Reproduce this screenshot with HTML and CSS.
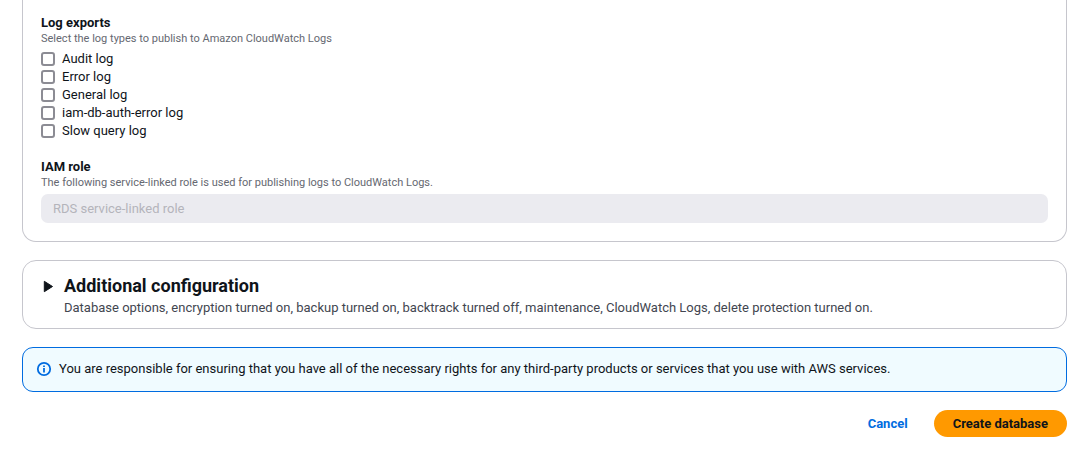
FILE: index.html
```html
<!DOCTYPE html>
<html lang="en">
<head>
<meta charset="utf-8">
<meta name="viewport" content="width=device-width, initial-scale=1">
<title>Create database</title>
<link rel="stylesheet" href="styles.css">
</head>
<body>
<form class="page">
  <section class="panel panel-open">
    <fieldset class="field">
      <legend class="label">Log exports</legend>
      <p class="hint">Select the log types to publish to Amazon CloudWatch Logs</p>
      <div class="options">
        <label class="option"><input class="box" type="checkbox">Audit log</label>
        <label class="option"><input class="box" type="checkbox">Error log</label>
        <label class="option"><input class="box" type="checkbox">General log</label>
        <label class="option"><input class="box" type="checkbox">iam-db-auth-error log</label>
        <label class="option"><input class="box" type="checkbox">Slow query log</label>
      </div>
    </fieldset>
    <div class="field">
      <label class="label" for="role">IAM role</label>
      <p class="hint" id="role-hint">The following service-linked role is used for publishing logs to CloudWatch Logs.</p>
      <input class="text-input" id="role" type="text" value="RDS service-linked role" aria-describedby="role-hint" disabled>
    </div>
  </section>

  <section class="panel expander">
    <button class="toggle" type="button" aria-expanded="false" aria-labelledby="more-title">
      <svg class="caret" viewBox="0 0 14 14" aria-hidden="true"><path d="M3.3 2.3v10.4L11.5 7.5z" fill="currentColor" stroke="currentColor" stroke-width="1" stroke-linejoin="round"/></svg>
    </button>
    <div>
      <h2 class="title" id="more-title">Additional configuration</h2>
      <p class="summary">Database options, encryption turned on, backup turned on, backtrack turned off, maintenance, CloudWatch Logs, delete protection turned on.</p>
    </div>
  </section>

  <div class="notice" role="note">
    <svg class="info" viewBox="0 0 16 16" aria-hidden="true"><circle cx="8" cy="8" r="6.2" fill="none" stroke="currentColor" stroke-width="1.8"/><path d="M7.1 7h1.8v4.6H7.1zM7.1 4.4h1.8V6H7.1z" fill="currentColor"/></svg>
    <p class="notice-text">You are responsible for ensuring that you have all of the necessary rights for any third-party products or services that you use with AWS services.</p>
  </div>

  <div class="actions">
    <button class="button" type="button">Cancel</button>
    <button class="button primary" type="submit">Create database</button>
  </div>
</form>
</body>
</html>
```
FILE: styles.css
```css
* { box-sizing: border-box; }
body {
  margin: 0;
  background: #fff;
  color: #0f141a;
  font: 13px/18px Roboto, "Noto Sans", sans-serif;
}
p, h2 { margin: 0; }
.page {
  display: flex;
  flex-direction: column;
  gap: 18px;
  padding: 0 17px 28px 22px;
}
.panel {
  border: 1px solid #c6c6cd;
  border-radius: 14px;
}
.panel-open {
  display: flex;
  flex-direction: column;
  gap: 18px;
  padding: 14px 18px 18px;
  border-top: 0;
  border-radius: 0 0 14px 14px;
}
.field {
  display: flex;
  flex-direction: column;
  min-width: 0;
  margin: 0;
  padding: 0;
  border: 0;
}
.label {
  padding: 0;
  font-weight: 700;
}
.hint {
  margin-bottom: 4px;
  color: #656871;
  font-size: 11px;
  line-height: 14px;
}
.options {
  display: flex;
  flex-direction: column;
  align-items: flex-start;
}
.option {
  display: flex;
  align-items: center;
  gap: 7px;
}
.box {
  appearance: none;
  width: 14px;
  height: 14px;
  margin: 0;
  border: 2px solid #8c8c94;
  border-radius: 3px;
  background: #fff;
}
.box:checked { background: #006ce0; }
.text-input {
  width: 100%;
  height: 29px;
  padding: 0 12px;
  border: 0;
  border-radius: 7px;
  background: #ebebf0;
  color: #b4b4bb;
  font: inherit;
}
.expander {
  display: flex;
  gap: 9px;
  padding: 14px 18px 11px;
}
.toggle {
  display: flex;
  align-items: center;
  height: 22px;
  padding: 0;
  border: 0;
  background: none;
  color: inherit;
}
.caret { width: 14px; height: 14px; }
.title {
  font-size: 18px;
  font-weight: 700;
  line-height: 22px;
}
.summary {
  padding-top: 2px;
  color: #424650;
}
.notice {
  display: flex;
  align-items: center;
  gap: 7px;
  padding: 12px 13px 13px;
  border: 1px solid #006ce0;
  border-radius: 11px;
  background: #f0fbff;
}
.info {
  flex: none;
  width: 16px;
  height: 16px;
  color: #006ce0;
}
.actions {
  display: flex;
  justify-content: flex-end;
  gap: 7px;
}
.button {
  height: 27px;
  padding: 0 19px;
  border: 0;
  border-radius: 14px;
  background: none;
  color: #006ce0;
  font: inherit;
  font-weight: 700;
}
.primary {
  background: #ff9900;
  color: #0f141a;
}
```
